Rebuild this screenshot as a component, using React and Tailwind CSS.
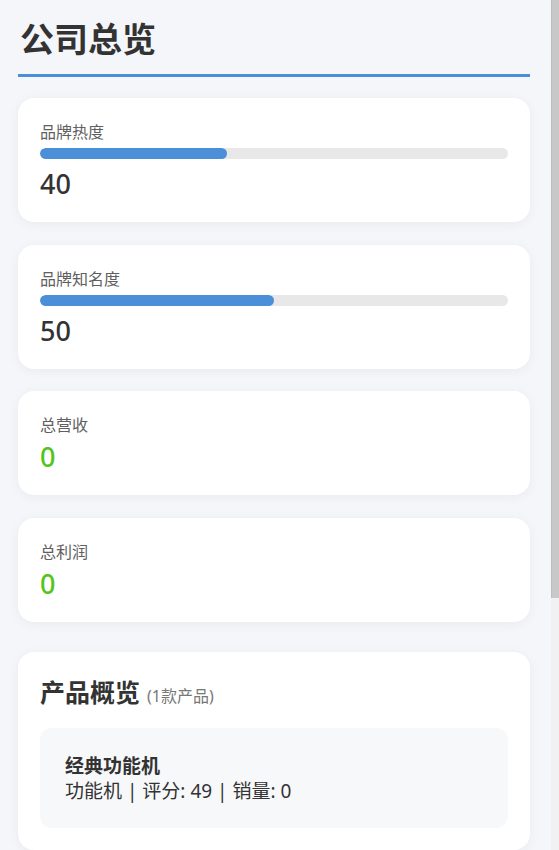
import React from "react";

const font = { fontFamily: '"Noto Sans", "Noto Sans CJK SC", sans-serif' };

function StatCard({ label, value, percent, green }) {
  return (
    <div className="bg-white rounded-[16px] shadow-[0_2px_12px_rgba(0,0,0,0.05)] px-[22px] pt-[22px] pb-[22px] flex flex-col gap-[4px]">
      <div className="text-[16px] leading-[24px] text-[#606060]">{label}</div>
      {percent != null && (
        <div className="h-[11px] rounded-full bg-[#e8e8e8] overflow-hidden mb-[5px]">
          <div
            className="h-full rounded-full bg-[#4a8fd8]"
            style={{ width: `${percent}%` }}
          />
        </div>
      )}
      <div
        className={
          "text-[27px] leading-[32px] font-medium " +
          (green ? "text-[#52c41a]" : "text-[#333]")
        }
      >
        {value}
      </div>
    </div>
  );
}

export default function App() {
  const stats = [
    { label: "品牌热度", value: 40, percent: 40 },
    { label: "品牌知名度", value: 50, percent: 50 },
    { label: "总营收", value: 0, green: true },
    { label: "总利润", value: 0, green: true },
  ];

  return (
    <div style={font} className="h-[850px] flex bg-[#f5f6fa] overflow-hidden">
      <div className="flex-1 min-w-0 pl-[18px] pr-[21px] pt-[17px]">
        {/* 标题 */}
        <h1 className="text-[34px] leading-[44px] font-bold text-[#333] pl-[2px] pb-[13px] border-b-[3px] border-[#4a8fd8]">
          公司总览
        </h1>

        <div className="mt-[21px] flex flex-col gap-[22.5px]">
          {stats.map((s) => (
            <StatCard key={s.label} {...s} />
          ))}
        </div>

        {/* 产品概览 */}
        <div className="mt-[30px] bg-white rounded-[16px] shadow-[0_2px_12px_rgba(0,0,0,0.05)] px-[22px] pt-[24px] pb-[22px]">
          <div className="flex items-baseline gap-[7px]">
            <span className="text-[25px] leading-[32px] font-bold text-[#333]">
              产品概览
            </span>
            <span className="text-[16px] text-[#777]">(1款产品)</span>
          </div>
          <div className="mt-[20px] bg-[#f7f8fa] rounded-[12px] px-[25px] pt-[26px] pb-[24px]">
            <div className="text-[19px] leading-[25px] font-bold text-[#333]">
              经典功能机
            </div>
            <div className="text-[19px] leading-[25px] text-[#333]">
              功能机 | 评分: 49 | 销量: 0
            </div>
          </div>
        </div>
      </div>

      {/* 滚动条 */}
      <div className="w-[8px] shrink-0 bg-[#f1f1f3] flex flex-col">
        <div className="h-[598px] bg-[#c8c8c8] border-l border-[#bdbdbd]" />
      </div>
    </div>
  );
}
